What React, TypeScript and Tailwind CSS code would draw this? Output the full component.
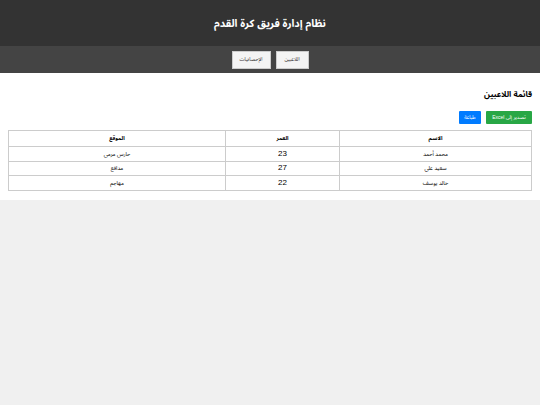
import React from "react";

const players = [
  { name: "محمد أحمد", age: 23, pos: "حارس مرمى" },
  { name: "سعيد علي", age: 27, pos: "مدافع" },
  { name: "خالد يوسف", age: 22, pos: "مهاجم" },
];

export default function App() {
  return (
    <div
      dir="rtl"
      className="min-h-screen bg-[#f0f0f0] text-black"
      style={{ fontFamily: '"Liberation Sans", "Noto Sans Arabic", Arial, sans-serif' }}
    >
      <header className="h-[46px] bg-[#333333] flex items-center justify-center">
        <h1 className="text-white font-bold text-[10.5px] leading-none">نظام إدارة فريق كرة القدم</h1>
      </header>
      <nav className="h-[27px] bg-[#444444] flex items-center justify-center gap-[5px]">
        <button className="h-[18px] w-[33px] bg-[#f4f4f4] border border-[#cccccc] text-[5px] leading-none text-[#333]">
          اللاعبين
        </button>
        <button className="h-[18px] w-[39px] bg-[#f4f4f4] border border-[#cccccc] text-[5px] leading-none text-[#333]">
          الإحصائيات
        </button>
      </nav>
      <main className="bg-white px-[8px] pt-[18px] pb-[9px]">
        <h2 className="font-bold text-[8px] leading-none mb-[12px]">قائمة اللاعبين</h2>
        <div className="flex gap-[5px] mb-[6px]">
          <button className="h-[13px] w-[46px] bg-[#28a745] text-white text-[5px] leading-none rounded-[1px]">
            تصدير إلى Excel
          </button>
          <button className="h-[13px] w-[22px] bg-[#007bff] text-white text-[5px] leading-none rounded-[1px]">
            طباعة
          </button>
        </div>
        <table className="w-full border-collapse text-[5.5px]">
          <thead>
            <tr className="h-[16px]">
              <th className="w-[192px] border border-[#cccccc] font-bold text-center">الاسم</th>
              <th className="w-[114px] border border-[#cccccc] font-bold text-center">العمر</th>
              <th className="border border-[#cccccc] font-bold text-center">الموقع</th>
            </tr>
          </thead>
          <tbody>
            {players.map((p) => (
              <tr key={p.name} className="h-[14.5px]">
                <td className="border border-[#cccccc] text-center">{p.name}</td>
                <td className="border border-[#cccccc] text-center text-[8px]">{p.age}</td>
                <td className="border border-[#cccccc] text-center">{p.pos}</td>
              </tr>
            ))}
          </tbody>
        </table>
      </main>
    </div>
  );
}
